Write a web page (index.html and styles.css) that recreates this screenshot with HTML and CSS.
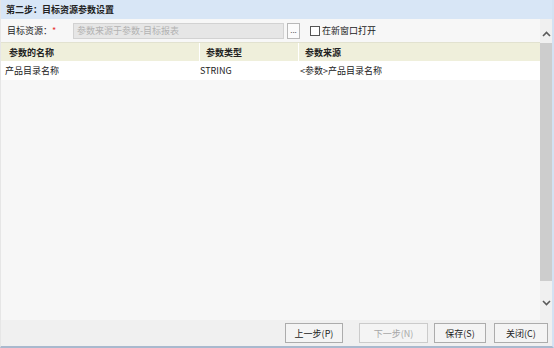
FILE: index.html
```html
<!DOCTYPE html>
<html lang="zh-CN">
<head>
    <meta charset="UTF-8">
    <title>第二步：目标资源参数设置</title>
    <link rel="stylesheet" href="styles.css">
</head>
<body>
    <div class="dialog">
        <div class="title">第二步：目标资源参数设置</div>
        <div class="main">
            <div class="content">
                <div class="form-row">
                    <label class="label">目标资源：<span class="req">*</span></label>
                    <div class="input">参数来源于参数-目标报表</div>
                    <div class="more">...</div>
                    <label class="check"><span class="box"></span>在新窗口打开</label>
                </div>
                <div class="grid">
                    <div class="row head">
                        <div class="c1">参数的名称</div>
                        <div class="c2">参数类型</div>
                        <div class="c3">参数来源</div>
                    </div>
                    <div class="row data">
                        <div class="c1">产品目录名称</div>
                        <div class="c2">STRING</div>
                        <div class="c3">&lt;参数&gt;产品目录名称</div>
                    </div>
                </div>
            </div>
            <div class="scrollbar">
                <div class="arrow up">
                    <svg width="9" height="6" viewBox="0 0 9 6"><path d="M1 5 L4.5 1.5 L8 5" fill="none" stroke="#5a5a5a" stroke-width="1.6"/></svg>
                </div>
                <div class="thumb"></div>
                <div class="arrow down">
                    <svg width="9" height="6" viewBox="0 0 9 6"><path d="M1 1 L4.5 4.5 L8 1" fill="none" stroke="#5a5a5a" stroke-width="1.6"/></svg>
                </div>
            </div>
        </div>
        <div class="footer">
            <button class="btn prev">上一步(P)</button>
            <button class="btn next" disabled>下一步(N)</button>
            <button class="btn save">保存(S)</button>
            <button class="btn close">关闭(C)</button>
        </div>
    </div>
</body>
</html>
```

FILE: styles.css
```css
* {
    box-sizing: border-box;
}

body {
    margin: 0;
    font-family: "Noto Sans CJK SC", "Noto Sans", sans-serif;
    font-size: 9px;
    color: #222;
    background-color: #fff;
}

.dialog {
    display: flex;
    flex-direction: column;
    width: 554px;
    height: 348px;
    border-right: 2px solid #d3e2f3;
    border-bottom: 2px solid #a9b9ce;
    border-left: 1px solid #e6e6e6;
}

.title {
    height: 19px;
    line-height: 19px;
    padding-left: 5px;
    font-weight: 700;
    background-color: #d8e6f6;
}

.main {
    display: flex;
    height: 301px;
    background-color: #f7f7f7;
}

.content {
    flex: 1;
}

.form-row {
    display: flex;
    align-items: center;
    height: 23px;
    padding-left: 6px;
}

.label {
    width: 66px;
}

.req {
    color: #e8322f;
}

.input {
    width: 211px;
    height: 16px;
    line-height: 14px;
    padding-left: 3px;
    color: #b2b2b2;
    background-color: #e6e6e6;
    border: 1px solid #d2d2d2;
}

.more {
    width: 13px;
    height: 16px;
    margin-left: 3px;
    line-height: 12px;
    text-align: center;
    font-size: 8px;
    color: #555;
    background-color: #fbfbfb;
    border: 1px solid #b8b8b8;
}

.check {
    display: flex;
    align-items: center;
    margin-left: 10px;
}

.box {
    width: 10px;
    height: 10px;
    margin-right: 2px;
    background-color: #fff;
    border: 1px solid #555;
}

.row {
    display: flex;
    height: 19px;
    line-height: 19px;
}

.head {
    font-weight: 700;
    background-color: #efefdb;
    border-top: 1px solid #e2e2d0;
}

.data {
    background-color: #fff;
}

.c1 {
    width: 198px;
}

.c2 {
    width: 99px;
}

.c3 {
    flex: 1;
}

.head > div {
    padding-left: 8px;
}

.head .c2,
.head .c3 {
    padding-left: 6px;
    border-left: 1px solid #fff;
}

.data .c1 {
    padding-left: 4px;
}

.data .c2 {
    padding-left: 1px;
}

.data .c3 {
    padding-left: 2px;
}

.scrollbar {
    display: flex;
    flex-direction: column;
    width: 12px;
    background-color: #f0f0f0;
}

.arrow {
    display: flex;
    justify-content: center;
}

.arrow.up {
    height: 24px;
    padding-top: 12px;
}

.thumb {
    height: 238px;
    background-color: #cdcdcd;
}

.arrow.down {
    height: 39px;
    padding-top: 19px;
}

.footer {
    display: flex;
    justify-content: flex-end;
    align-items: center;
    height: 26px;
    padding-right: 4px;
    background-color: #f0f0f0;
}

.btn {
    height: 20px;
    padding: 0;
    font-family: inherit;
    font-size: 9px;
    color: #222;
    background-color: #f4f4f4;
    border: 1px solid #acacac;
    border-radius: 0;
}

.prev {
    width: 58px;
}

.next {
    width: 69px;
    margin-left: 16px;
    color: #a6a6a6;
    border-color: #cbcbcb;
}

.save {
    width: 52px;
    margin-left: 6px;
}

.close {
    width: 54px;
    margin-left: 8px;
}
```
